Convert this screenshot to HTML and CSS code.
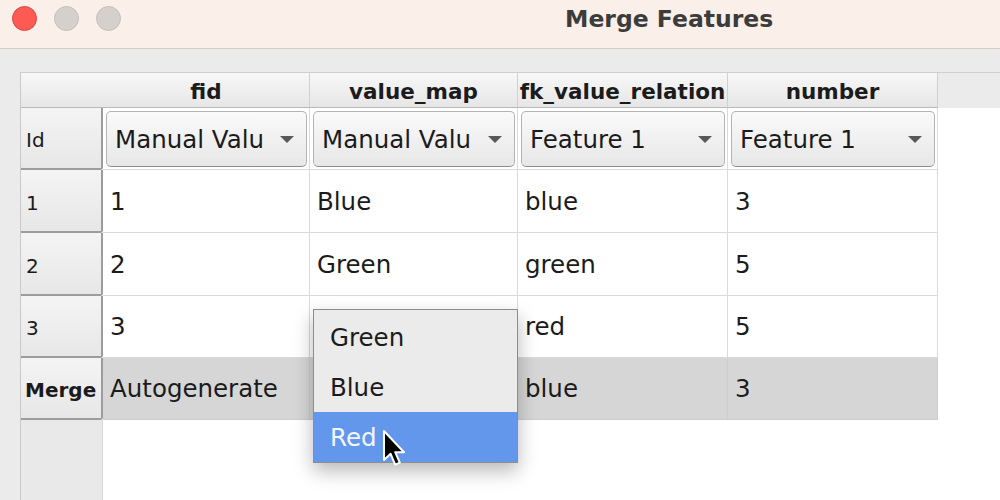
FILE: index.html
```html
<!DOCTYPE html>
<html lang="en">
<head>
    <meta charset="UTF-8">
    <meta name="viewport" content="width=device-width, initial-scale=1.0">
    <title>Merge Features</title>
    <link rel="stylesheet" href="styles.css">
</head>
<body>
    <div class="titlebar">
        <span class="light red"></span>
        <span class="light"></span>
        <span class="light"></span>
        <h1>Merge Features</h1>
    </div>
    <div class="content">
        <div class="view">
            <div class="grid">
                <!-- header row -->
                <div class="hhead corner"></div>
                <div class="hhead">fid</div>
                <div class="hhead">value_map</div>
                <div class="hhead">fk_value_relation</div>
                <div class="hhead">number</div>
                <div class="hfill"></div>

                <!-- strategy row -->
                <div class="vhead">Id</div>
                <div class="cell"><div class="combo"><span>Manual Valu</span><i class="arrow"></i></div></div>
                <div class="cell"><div class="combo"><span>Manual Valu</span><i class="arrow"></i></div></div>
                <div class="cell"><div class="combo"><span>Feature 1</span><i class="arrow"></i></div></div>
                <div class="cell"><div class="combo"><span>Feature 1</span><i class="arrow"></i></div></div>
                <div class="blank"></div>

                <div class="vhead">1</div>
                <div class="cell">1</div>
                <div class="cell">Blue</div>
                <div class="cell">blue</div>
                <div class="cell">3</div>
                <div class="blank"></div>

                <div class="vhead">2</div>
                <div class="cell">2</div>
                <div class="cell">Green</div>
                <div class="cell">green</div>
                <div class="cell">5</div>
                <div class="blank"></div>

                <div class="vhead">3</div>
                <div class="cell">3</div>
                <div class="cell"></div>
                <div class="cell">red</div>
                <div class="cell">5</div>
                <div class="blank"></div>

                <div class="vhead bold">Merge</div>
                <div class="cell merge">Autogenerate</div>
                <div class="cell merge"></div>
                <div class="cell merge">blue</div>
                <div class="cell merge">3</div>
                <div class="blank"></div>

                <div class="vfill"></div>
                <div class="blank wide"></div>
            </div>

            <div class="popup">
                <div class="item">Green</div>
                <div class="item">Blue</div>
                <div class="item active">Red</div>
            </div>
            <svg class="cursor" width="24" height="38" viewBox="0 0 12 19">
                <path d="M1 1 L1 15.5 L4.3 12.4 L6.6 17.8 L8.9 16.8 L6.6 11.6 L11 11.6 Z" fill="#000" stroke="#fff" stroke-width="1" stroke-linejoin="round"/>
            </svg>
        </div>
    </div>
</body>
</html>
```

FILE: styles.css
```css
body {
    margin: 0;
    width: 1000px;
    height: 500px;
    overflow: hidden;
    background: #ebebeb;
    font-family: "DejaVu Sans", sans-serif;
    color: #1b1b1b;
}
.titlebar {
    display: flex;
    align-items: center;
    height: 49px;
    padding: 0 0 11px 12px;
    background: #fbefea;
    border-bottom: 1px solid #d3cbc7;
    box-sizing: border-box;
}
.light {
    width: 23px;
    height: 23px;
    border-radius: 50%;
    background: #d6d0cd;
    border: 1px solid #c6bfbb;
    margin-right: 17px;
}
.light.red {
    background: #fd5a53;
    border-color: #e0443e;
}
h1 {
    margin: 0 0 0 427px;
    font-size: 23.5px;
    font-weight: bold;
    color: #3c3c3c;
}
.content {
    padding: 23px 0 0 20px;
}
.view {
    position: relative;
    border-left: 1px solid #c9c9c9;
    border-top: 1px solid #cfcfcf;
}
.grid {
    display: grid;
    grid-template-columns: 82px 207px 208px 210px 210px 1fr;
    grid-template-rows: 35px 62px 63px 63px 62px 62px 80px;
    background: #fff;
}
.hhead {
    display: flex;
    align-items: center;
    justify-content: center;
    padding-top: 3px;
    font-size: 21.5px;
    font-weight: bold;
    background: linear-gradient(#f7f7f7, #e6e6e6);
    border-right: 1px solid #d0d0d0;
    border-bottom: 1px solid #b9b9b9;
    white-space: nowrap;
    overflow: hidden;
}
.hhead.corner {
    border-right: none;
}
.hfill {
    background: #ebebeb;
}
.vhead {
    display: flex;
    align-items: center;
    padding: 4px 0 0 5px;
    font-size: 20px;
    background: linear-gradient(#f4f4f4, #e7e7e7);
    border-right: 2px solid #9c9c9c;
    border-bottom: 2px solid #9c9c9c;
    border-radius: 0 0 3px 0;
}
.vhead.bold {
    font-weight: bold;
    font-size: 20px;
    padding-left: 4px;
}
.vfill {
    background: #e9e9e9;
    border-right: 1px solid #d6d6d6;
}
.cell {
    display: flex;
    align-items: center;
    padding-left: 7px;
    font-size: 24.5px;
    border-right: 1px solid #dadada;
    border-bottom: 1px solid #dadada;
    white-space: nowrap;
}
.cell.merge {
    background: #d6d6d6;
    border-color: #cdcdcd;
}
.blank.wide {
    grid-column: span 5;
}
.combo {
    flex: 1;
    display: flex;
    align-items: center;
    height: 56px;
    margin: 0 2px 0 -4px;
    padding: 2px 12px 0 8px;
    border: 1px solid #b4b4b4;
    border-bottom-color: #8c8c8c;
    border-radius: 5px;
    background: linear-gradient(#fafafa, #e7e7e7);
    overflow: hidden;
    box-sizing: border-box;
}
.combo span {
    flex: 1;
    overflow: hidden;
    white-space: nowrap;
}
.arrow {
    width: 0;
    height: 0;
    margin-left: 14px;
    border-left: 7px solid transparent;
    border-right: 7px solid transparent;
    border-top: 7px solid #585858;
}
.popup {
    position: absolute;
    left: 292px;
    top: 236px;
    width: 203px;
    padding: 2px 0 0;
    background: #ebebeb;
    border: 1px solid #8d8d8d;
    box-shadow: 0 8px 18px rgba(0, 0, 0, 0.28);
}
.item {
    display: flex;
    align-items: center;
    height: 50px;
    padding-left: 16px;
    font-size: 24.5px;
}
.item.active {
    background: #6297ec;
    color: #f4f7ff;
}
.cursor {
    position: absolute;
    left: 361px;
    top: 356px;
}
```
